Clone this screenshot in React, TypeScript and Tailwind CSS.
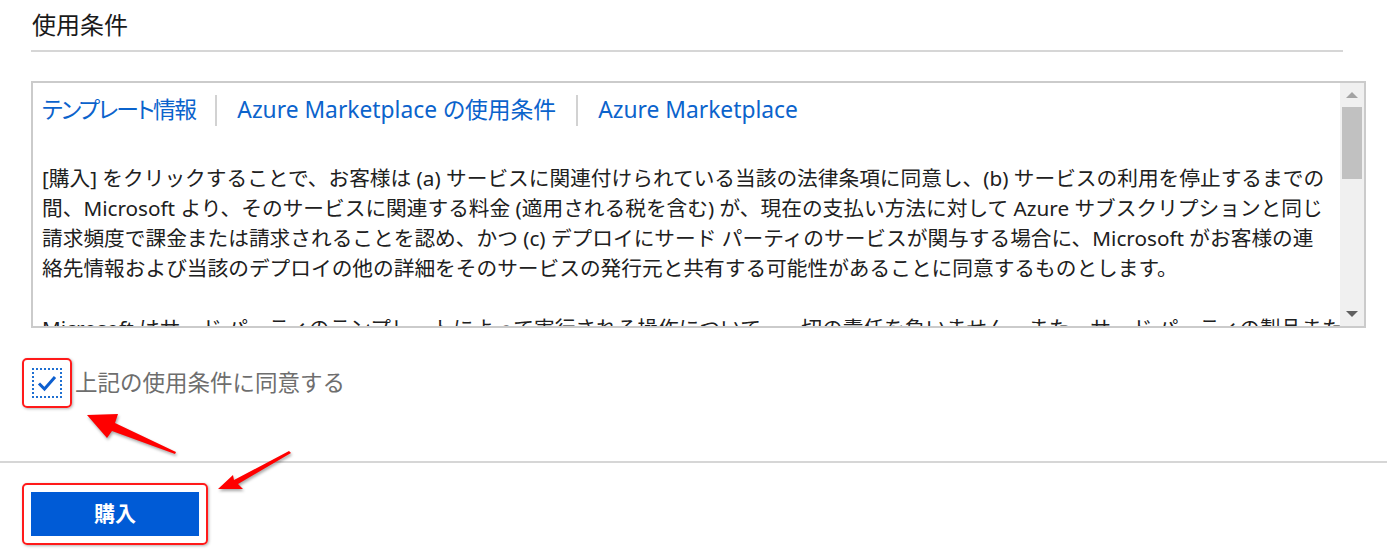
const font = "font-['Noto_Sans','Noto_Sans_CJK_JP',sans-serif]";

const lines = [
  "[購入] をクリックすることで、お客様は (a) サービスに関連付けられている当該の法律条項に同意し、(b) サービスの利用を停止するまでの",
  "間、Microsoft より、そのサービスに関連する料金 (適用される税を含む) が、現在の支払い方法に対して Azure サブスクリプションと同じ",
  "請求頻度で課金または請求されることを認め、かつ (c) デプロイにサード パーティのサービスが関与する場合に、Microsoft がお客様の連",
  "絡先情報および当該のデプロイの他の詳細をそのサービスの発行元と共有する可能性があることに同意するものとします。",
];

function Arrows() {
  return (
    <svg
      className="absolute inset-0 pointer-events-none drop-shadow-[1px_2px_1.5px_rgba(0,0,0,0.35)]"
      width="1387"
      height="550"
      viewBox="0 0 1387 550"
    >
      <polygon
        fill="#ff0000"
        points="87,415 118,414 115,423 176,452 175,454 112,431 107,438"
      />
      <polygon
        fill="#ff0000"
        points="218,489 233,475 234,480 289,451 291,453 238,484 243,489"
      />
    </svg>
  );
}

function Scrollbar() {
  return (
    <div className="w-[24px] bg-[#f0f0f0] flex flex-col items-center">
      <div className="h-[24px] flex items-center justify-center">
        <div className="w-0 h-0 border-l-[6px] border-r-[6px] border-b-[6px] border-l-transparent border-r-transparent border-b-[#a3a3a3]" />
      </div>
      <div className="w-[20px] h-[72px] bg-[#c1c1c1]" />
      <div className="flex-1" />
      <div className="h-[24px] flex items-center justify-center">
        <div className="w-0 h-0 border-l-[6px] border-r-[6px] border-t-[6px] border-l-transparent border-r-transparent border-t-[#606060]" />
      </div>
    </div>
  );
}

export default function App() {
  return (
    <div className={`relative w-[1387px] h-[550px] overflow-hidden bg-white ${font}`}>
      <div className="pl-[31px] pr-[44px]">
        <h2 className="h-[52px] flex items-center pl-[1px] text-[24px] text-[#1a1a1a] border-b-2 border-[#d6d6d6]">
          使用条件
        </h2>
      </div>

      <div className="ml-[31px] mt-[29px] w-[1335px] h-[247px] border-2 border-[#cbcbcb] flex">
        <div className="flex-1 pl-[9px] overflow-hidden">
          <div className="h-[52px] pt-[3px] flex items-center text-[22.8px] text-[#0b63cc] [font-feature-settings:'palt']">
            <span className="tracking-[-1.7px]">テンプレート情報</span>
            <span className="mx-[20px] w-[2px] h-[31px] bg-[#d2d2d2]" />
            <span>Azure Marketplace の使用条件</span>
            <span className="mx-[20px] w-[2px] h-[31px] bg-[#d2d2d2]" />
            <span>Azure Marketplace</span>
          </div>
          <div className="mt-[28px] text-[20.7px] leading-[30px] text-[#202020]">
            {lines.map((l) => (
              <div key={l} className="whitespace-nowrap">
                {l}
              </div>
            ))}
            <div className="mt-[30px] whitespace-nowrap">
              Microsoft はサード パーティのテンプレートによって実行される操作について、一切の責任を負いません。また、サード パーティの製品またはサービスについて
            </div>
          </div>
        </div>
        <Scrollbar />
      </div>

      <div className="mt-[30px] ml-[22px] flex items-center">
        <div className="p-[8px] border-2 border-[#ff1a1a] rounded-[5px] shadow-[1px_1px_3px_rgba(0,0,0,0.3)]">
          <div className="w-[30px] h-[30px] bg-white border-2 border-dotted border-[#1f6fd1] flex items-center justify-center">
            <svg width="22" height="22" viewBox="0 0 22 22">
              <path d="M3 11.5 L8.5 17 L19 5" fill="none" stroke="#0d5fcf" strokeWidth="3" />
            </svg>
          </div>
        </div>
        <span className="ml-[3px] text-[22.5px] text-[#6e6e6e]">上記の使用条件に同意する</span>
      </div>

      <div className="mt-[53px] h-[2px] bg-[#d6d6d6]" />

      <div className="mt-[20px] ml-[22px] inline-block p-[7px] border-2 border-[#ff1a1a] rounded-[5px] shadow-[1px_1px_3px_rgba(0,0,0,0.3)]">
        <button className="w-[168px] h-[44px] bg-[#005bd6] text-white text-[21px] font-bold flex items-center justify-center">
          購入
        </button>
      </div>

      <Arrows />
    </div>
  );
}
